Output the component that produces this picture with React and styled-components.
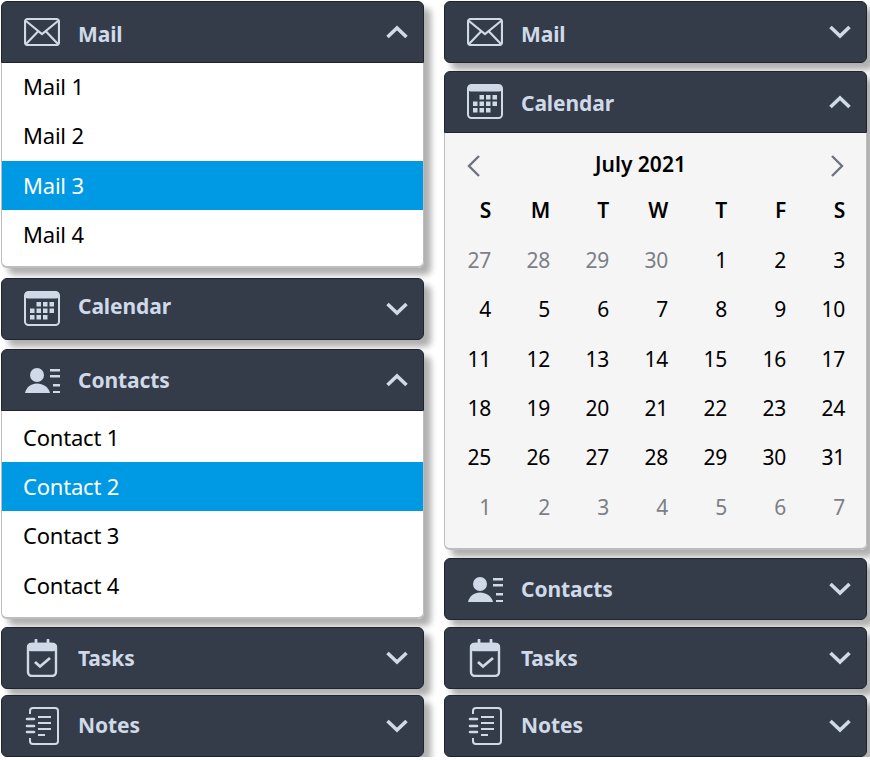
import styled, { createGlobalStyle } from "styled-components";

const GlobalStyle = createGlobalStyle`
  html, body {
    margin: 0;
    padding: 0;
    background: #fff;
    overflow: hidden;
  }
  body {
    font-family: "Noto Sans", "Open Sans", sans-serif;
  }
`;

const MailIcon = () => (
  <svg width="36" height="28" viewBox="0 0 36 28" fill="none" stroke="currentColor" strokeWidth="2.2">
    <rect x="1" y="1" width="34" height="26" rx="3" />
    <path d="M2 3l16 13L34 3M2 26l12-12.500M34 26L22 13.500" />
  </svg>
);

const CalendarIcon = () => (
  <svg width="36" height="36" viewBox="0 0 36 36" fill="none">
    <rect x="1" y="1" width="34" height="33" rx="3.500" stroke="currentColor" strokeWidth="2" />
    <rect x="1" y="1" width="34" height="6.500" rx="3" fill="currentColor" />
    <g fill="currentColor">
      <rect x="12.500" y="11" width="4.500" height="4.500" />
      <rect x="19" y="11" width="4.500" height="4.500" />
      <rect x="25.500" y="11" width="4.500" height="4.500" />
      <rect x="6" y="17.500" width="4.500" height="4.500" />
      <rect x="12.500" y="17.500" width="4.500" height="4.500" />
      <rect x="19" y="17.500" width="4.500" height="4.500" />
      <rect x="25.500" y="17.500" width="4.500" height="4.500" />
      <rect x="6" y="24" width="4.500" height="4.500" />
      <rect x="12.500" y="24" width="4.500" height="4.500" />
      <rect x="19" y="24" width="4.500" height="4.500" />
    </g>
  </svg>
);

const ContactsIcon = () => (
  <svg width="36" height="26" viewBox="0 0 36 26" fill="currentColor">
    <circle cx="13" cy="8" r="7" />
    <path d="M1 26c1.500-6 6-9.500 12-9.500S24.500 20 26 26z" />
    <rect x="26" y="2" width="10" height="2.500" />
    <rect x="26" y="8" width="10" height="2.500" />
    <rect x="29" y="17" width="7" height="2.500" />
    <rect x="29" y="24" width="7" height="2" />
  </svg>
);

const TasksIcon = () => (
  <svg width="32" height="38" viewBox="0 0 32 38" fill="none" stroke="currentColor" strokeWidth="2.4">
    <rect x="2" y="5" width="28" height="32" rx="4" />
    <rect x="2" y="5" width="28" height="6" rx="3" fill="currentColor" />
    <path d="M10 1v5M22 1v5" strokeLinecap="round" strokeWidth="2.800" />
    <path d="M9 23l5 4.500L24 19" strokeWidth="2.800" />
  </svg>
);

const NotesIcon = () => (
  <svg width="36" height="38" viewBox="0 0 36 38" fill="none" stroke="currentColor" strokeWidth="2">
    <path d="M6 7V4a3 3 0 0 1 3-3h22a3 3 0 0 1 3 3v30a3 3 0 0 1-3 3H9a3 3 0 0 1-3-3v-3" />
    <path d="M14 10h13M14 16h13M14 22h13M14 28h7" strokeWidth="2.200" />
    <path d="M3 12h7M3 19h7M3 25h7" strokeWidth="2.600" strokeLinecap="round" />
  </svg>
);

const Chevron = ({ open }) => (
  <svg width="22" height="14" viewBox="0 0 22 14" fill="none" stroke="currentColor" strokeWidth="3.600">
    <path d={open ? "M1.500 12L11 3l9.500 9" : "M1.500 2L11 11l9.500-9"} />
  </svg>
);

const NavArrow = ({ right }) => (
  <ArrowBox>
    <svg width="14" height="22" viewBox="0 0 14 22" fill="none" stroke="#6d7480" strokeWidth="2.400">
      <path d={right ? "M2 1l10 10L2 21" : "M12 1L2 11l10 10"} />
    </svg>
  </ArrowBox>
);

const ArrowBox = styled.span`
  display: flex;
  margin-top: 4px;
`;

const Page = styled.div`
  display: grid;
  grid-template-columns: 423px 423px;
  column-gap: 20px;
  padding: 1px 0 0 1px;
  align-items: start;
`;

const Column = styled.div`
  display: flex;
  flex-direction: column;
`;

const Panel = styled.section`
  border-radius: 6px;
  box-shadow: 7px 7px 6px #b0b0b0;
  margin-bottom: ${({ $after }) => $after}px;
`;

const Header = styled.header`
  display: flex;
  align-items: center;
  height: 62.4px;
  box-sizing: border-box;
  padding: 0 15px 0 22px;
  background: #343b49;
  color: #cfd9e7;
  border: 1px solid #20242d;
  border-radius: ${({ $open }) => ($open ? "6px 6px 0 0" : "6px")};
`;

const IconBox = styled.span`
  display: flex;
  justify-content: center;
  align-items: center;
  width: 36px;
  margin-right: 18px;
`;

const Title = styled.h3`
  flex: 1;
  margin: 0;
  font-size: 21px;
  font-weight: 700;
  letter-spacing: -0.1px;
  transform: translateY(${({ $dy }) => $dy || 0}px);
`;

const Body = styled.div`
  display: flex;
  flex-direction: column;
  box-sizing: border-box;
  height: ${({ $height }) => $height}px;
  background: ${({ $bg }) => $bg || "#fff"};
  border: 1px solid #bdbdbd;
  border-top: 0;
  border-bottom-width: 2px;
  border-radius: 0 0 6px 6px;
`;

const Rows = styled.div`
  margin-top: ${({ $shift }) => $shift}px;
`;

const Item = styled.div`
  height: 49.3px;
  line-height: 49.3px;
  padding-left: 21px;
  font-size: 22px;
  letter-spacing: -0.2px;
  color: ${({ $selected }) => ($selected ? "#fff" : "#000")};
  background: ${({ $selected }) => ($selected ? "#0099e3" : "transparent")};
`;

const MonthBar = styled.div`
  display: flex;
  align-items: center;
  justify-content: space-between;
  height: 58px;
  padding: 3px 22px 0 22px;
  box-sizing: border-box;
`;

const Month = styled.span`
  margin-right: 30px;
  font-size: 21px;
  font-weight: 600;
  color: #000;
`;

const Days = styled.div`
  display: grid;
  grid-template-columns: repeat(7, 59px);
  grid-auto-rows: 49.4px;
  margin-top: -5px;
`;

const Day = styled.span`
  text-align: right;
  padding-right: 13px;
  line-height: 49.4px;
  font-size: 21px;
  letter-spacing: -0.2px;
  font-weight: ${({ $head }) => ($head ? 600 : 400)};
  color: ${({ $muted }) => ($muted ? "#7c7f87" : "#000")};
`;

const icons = {
  Mail: <MailIcon />,
  Calendar: <CalendarIcon />,
  Contacts: <ContactsIcon />,
  Tasks: <TasksIcon />,
  Notes: <NotesIcon />,
};

const AccordionPanel = ({ name, open, after, titleDy, children }) => (
  <Panel $after={after}>
    <Header $open={open}>
      <IconBox>{icons[name]}</IconBox>
      <Title $dy={titleDy}>{name}</Title>
      <Chevron open={open} />
    </Header>
    {children}
  </Panel>
);

const List = ({ label, selected, height, shift }) => (
  <Body $height={height}>
    <Rows $shift={shift}>
      {[1, 2, 3, 4].map((n) => (
        <Item key={n} $selected={n === selected}>
          {label} {n}
        </Item>
      ))}
    </Rows>
  </Body>
);

const heads = ["S", "M", "T", "W", "T", "F", "S"];
const before = [27, 28, 29, 30];
const month = Array.from({ length: 31 }, (_, i) => i + 1);
const after = [1, 2, 3, 4, 5, 6, 7];

const Calendar = () => (
  <Body $bg="#f5f5f5" $height={416.6}>
    <MonthBar>
      <NavArrow />
      <Month>July 2021</Month>
      <NavArrow right />
    </MonthBar>
    <Days>
      {heads.map((d, i) => (
        <Day key={i} $head>
          {d}
        </Day>
      ))}
      {before.map((d) => (
        <Day key={`p${d}`} $muted>
          {d}
        </Day>
      ))}
      {month.map((d) => (
        <Day key={d}>{d}</Day>
      ))}
      {after.map((d) => (
        <Day key={`n${d}`} $muted>
          {d}
        </Day>
      ))}
    </Days>
  </Body>
);

const App = () => (
  <>
    <GlobalStyle />
    <Page>
      <Column>
        <AccordionPanel name="Mail" open after={10} titleDy={2}>
          <List label="Mail" selected={3} height={204.6} shift={-1.4} />
        </AccordionPanel>
        <AccordionPanel name="Calendar" after={8.6} titleDy={-3} />
        <AccordionPanel name="Contacts" open after={8}>
          <List label="Contact" selected={2} height={207.6} shift={1.5} />
        </AccordionPanel>
        <AccordionPanel name="Tasks" after={5.6} />
        <AccordionPanel name="Notes" after={0} titleDy={-1} />
      </Column>
      <Column>
        <AccordionPanel name="Mail" after={7.6} titleDy={2} />
        <AccordionPanel name="Calendar" open after={8} titleDy={1}>
          <Calendar />
        </AccordionPanel>
        <AccordionPanel name="Contacts" after={6.6} />
        <AccordionPanel name="Tasks" after={5.6} />
        <AccordionPanel name="Notes" after={0} titleDy={-1} />
      </Column>
    </Page>
  </>
);

export default App;
